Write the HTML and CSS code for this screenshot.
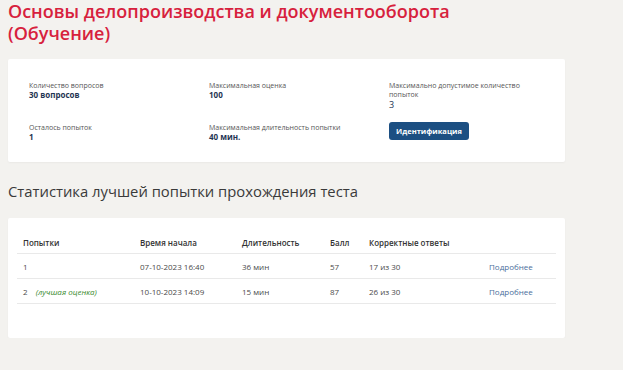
FILE: index.html
```html
<!DOCTYPE html>
<html lang="ru">
<head>
<meta charset="utf-8">
<link rel="stylesheet" href="styles.css">
</head>
<body>
<div class="page">
  <h1 class="title">Основы делопроизводства и документооборота<br>(Обучение)</h1>

  <div class="card info">
    <div class="field">
      <div class="label">Количество вопросов</div>
      <div class="value">30 вопросов</div>
    </div>
    <div class="field">
      <div class="label">Максимальная оценка</div>
      <div class="value">100</div>
    </div>
    <div class="field">
      <div class="label">Максимально допустимое количество попыток</div>
      <div class="value plain">3</div>
    </div>
    <div class="field">
      <div class="label">Осталось попыток</div>
      <div class="value">1</div>
    </div>
    <div class="field">
      <div class="label">Максимальная длительность попытки</div>
      <div class="value">40 мин.</div>
    </div>
    <div class="field">
      <button class="btn">Идентификация</button>
    </div>
  </div>

  <h2 class="subtitle">Статистика лучшей попытки прохождения теста</h2>

  <div class="card stats">
    <table class="table">
      <thead>
        <tr>
          <th class="c1">Попытки</th>
          <th class="c2">Время начала</th>
          <th class="c3">Длительность</th>
          <th class="c4">Балл</th>
          <th class="c5">Корректные ответы</th>
          <th class="c6"></th>
        </tr>
      </thead>
      <tbody>
        <tr>
          <td>1</td>
          <td>07-10-2023 16:40</td>
          <td>36 мин</td>
          <td>57</td>
          <td>17 из 30</td>
          <td><a class="link" href="#">Подробнее</a></td>
        </tr>
        <tr>
          <td>2 <span class="best">(лучшая оценка)</span></td>
          <td>10-10-2023 14:09</td>
          <td>15 мин</td>
          <td>87</td>
          <td>26 из 30</td>
          <td><a class="link" href="#">Подробнее</a></td>
        </tr>
      </tbody>
    </table>
  </div>
</div>
</body>
</html>
```

FILE: styles.css
```css
html, body {
  margin: 0;
  padding: 0;
  background: #f3f2ef;
  font-family: "Open Sans", "Noto Sans", sans-serif;
  color: #333;
}
.page {
  padding: 0 58px 0 8px;
}
.title {
  margin: 0 0 15px 0;
  font-size: 18px;
  line-height: 22px;
  font-weight: 600;
  color: #d7213d;
}
.card {
  background: #fff;
  border-radius: 2px;
  box-shadow: 0 1px 2px rgba(0,0,0,0.04);
}
.info {
  display: grid;
  grid-template-columns: 180px 180px 132px;
  grid-template-rows: 42px 24px;
  padding: 22px 21px 15px 21px;
}
.label {
  font-size: 7px;
  line-height: 9px;
  color: #555;
}
.value {
  font-size: 8px;
  line-height: 10px;
  font-weight: 700;
  color: #1f3553;
}
.value.plain {
  font-weight: 400;
  font-size: 9px;
  line-height: 11px;
}
.btn {
  display: block;
  margin-top: -1px;
  width: 80px;
  height: 18px;
  border: 0;
  border-radius: 3px;
  background: #1c4f82;
  color: #fff;
  font-family: inherit;
  font-weight: 700;
  font-size: 7.5px;
  padding: 0;
  cursor: pointer;
}
.subtitle {
  margin: 19px 0 17px 0;
  font-size: 14.8px;
  line-height: 20px;
  font-weight: 400;
  color: #3a3a3a;
}
.stats {
  padding: 12px 9px 34px 9px;
}
.table {
  width: 100%;
  border-collapse: collapse;
  font-size: 8px;
  line-height: 11px;
}
.table th {
  text-align: left;
  font-weight: 600;
  color: #333;
  padding: 7px 6px 5px 6px;
  border-bottom: 1px solid #e9e9e9;
}
.table td {
  padding: 7px 6px 6px 6px;
  color: #4a4a4a;
  border-bottom: 1px solid #e9e9e9;
}
.c1 { width: 105px; }
.c2 { width: 90px; }
.c3 { width: 76px; }
.c4 { width: 27px; }
.c5 { width: 108px; }
.best {
  font-style: italic;
  color: #3a8a2e;
  margin-left: 6px;
}
.link {
  color: #4b6e9c;
  text-decoration: none;
}
```
